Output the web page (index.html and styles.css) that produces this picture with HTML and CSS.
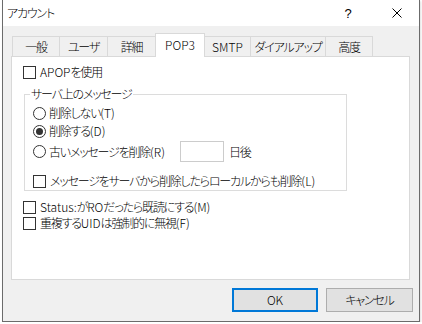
FILE: index.html
```html
<!DOCTYPE html>
<html lang="ja">
<head>
<meta charset="utf-8">
<title>アカウント</title>
<link rel="stylesheet" href="styles.css">
</head>
<body>
<div class="window">
  <div class="titlebar">
    <span class="title">アカウント</span>
    <span class="help">?</span>
    <span class="close">
      <svg width="10" height="10" viewBox="0 0 10 10"><path d="M0.5 0.5L9.5 9.5M9.5 0.5L0.5 9.5" stroke="#000" stroke-width="1" fill="none"/></svg>
    </span>
  </div>
  <div class="content">
    <div class="tabs">
      <div class="tab t1">一般</div>
      <div class="tab t2">ユーザ</div>
      <div class="tab t3">詳細</div>
      <div class="tab t4 active"><span class="en">POP3</span></div>
      <div class="tab t5"><span class="en">SMTP</span></div>
      <div class="tab t6">ダイアルアップ</div>
      <div class="tab t7">高度</div>
    </div>
    <div class="panel">
      <label class="row"><span class="check"></span><span><span class="en">APOP</span>を使用</span></label>
      <fieldset class="group">
        <legend>サーバ上のメッセージ</legend>
        <div class="row"><span class="radio"></span><span>削除しない<span class="en">(T)</span></span></div>
        <div class="row"><span class="radio on"></span><span>削除する<span class="en">(D)</span></span></div>
        <div class="row row-days">
          <div class="radio-label"><span class="radio"></span><span>古いメッセージを削除<span class="en">(R)</span></span></div>
          <span class="days-input"></span>
          <span class="days-unit">日後</span>
        </div>
        <div class="row row-local"><span class="check"></span><span>メッセージをサーバから削除したらローカルからも削除<span class="en">(L)</span></span></div>
      </fieldset>
      <div class="row row-status"><span class="check"></span><span><span class="en">Status:</span>が<span class="en">RO</span>だったら既読にする<span class="en">(M)</span></span></div>
      <div class="row"><span class="check"></span><span>重複する<span class="en">UID</span>は強制的に無視<span class="en">(F)</span></span></div>
    </div>
    <div class="buttons">
      <div class="btn ok"><span class="en">OK</span></div>
      <div class="btn cancel">キャンセル</div>
    </div>
  </div>
</div>
</body>
</html>
```

FILE: styles.css
```css
* { box-sizing: border-box; }
html, body { margin: 0; padding: 0; }
body {
  background: #ffffff;
  font-family: "Noto Sans CJK JP", "Noto Sans", sans-serif;
  font-size: 12px;
  font-weight: 300;
  letter-spacing: -1.2px;
  color: #000;
  font-feature-settings: "palt";
}
.en { letter-spacing: 0; }
.window {
  margin-left: 2px;
  width: 418px;
  height: 322px;
  border: 1px solid #6b6b6b;
  border-top: 0;
  background: #f0f0f0;
  display: flex;
  flex-direction: column;
  box-shadow: 1px 1px 2px rgba(0,0,0,0.12);
}
.titlebar {
  height: 26px;
  background: #fff;
  display: flex;
  align-items: center;
  flex-shrink: 0;
}
.title {
  padding-left: 4px;
  flex: 1;
  line-height: 16px;
}
.help {
  width: 10px;
  font-family: "Liberation Sans", sans-serif;
  font-size: 13px;
  font-weight: 400;
  letter-spacing: 0;
  margin-right: 39px;
  text-align: center;
}
.close {
  width: 10px;
  height: 10px;
  display: flex;
  margin-right: 17px;
}
.content {
  flex: 1;
  padding: 8px 9px 0 8px;
  display: flex;
  flex-direction: column;
}
.tabs {
  display: flex;
  align-items: flex-end;
  height: 22px;
  margin-left: 1px;
  position: relative;
  z-index: 1;
}
.tab {
  height: 20px;
  border: 1px solid #d9d9d9;
  border-bottom: 0;
  border-right: 0;
  background: #f0f0f0;
  display: flex;
  align-items: center;
  justify-content: center;
  line-height: 16px;
  padding-top: 1px;
  white-space: nowrap;
  flex-shrink: 0;
}
.tab.t7 { border-right: 1px solid #d9d9d9; }
.t1 { width: 47px; }
.t2 { width: 48px; }
.t3 { width: 48px; }
.t4 { width: 50px; }
.t5 { width: 45px; }
.t6 { width: 75px; }
.t7 { width: 48px; }
.tab.active {
  height: 24px;
  margin-bottom: -1px;
  background: #fff;
  border-right: 1px solid #d9d9d9;
  align-items: flex-start;
  padding-top: 3px;
}
.tab.active + .tab { border-left: 0; }
.panel {
  width: 399px;
  height: 224px;
  background: #fff;
  border: 1px solid #d9d9d9;
  padding: 7px 0 0 11px;
  display: flex;
  flex-direction: column;
  align-items: flex-start;
}
.row {
  height: 16px;
  display: flex;
  align-items: center;
  line-height: 16px;
  white-space: nowrap;
}
.check {
  width: 13px;
  height: 13px;
  border: 1px solid #333;
  background: #fff;
  margin-right: 4px;
  flex-shrink: 0;
}
.radio {
  width: 13px;
  height: 13px;
  border: 1px solid #333;
  border-radius: 50%;
  background: #fff;
  margin-right: 3px;
  flex-shrink: 0;
  display: flex;
  align-items: center;
  justify-content: center;
}
.radio.on::after {
  content: "";
  width: 7px;
  height: 7px;
  border-radius: 50%;
  background: #333;
}
.group {
  margin: 6px 0 0 1px;
  width: 323px;
  height: 105px;
  border: 1px solid #dcdcdc;
  padding: 3px 0 0 8px;
  display: flex;
  flex-direction: column;
  gap: 1px;
}
.group legend {
  padding: 0 1px;
  margin-left: -3px;
  line-height: 16px;
  height: 16px;
}
.group .row { margin-bottom: 1px; }
.row-days {
  height: 21px;
}
.radio-label {
  width: 147px;
  display: flex;
  align-items: center;
}
.days-input {
  width: 44px;
  height: 21px;
  border: 1px solid #cccccc;
  background: #fff;
}
.days-unit { margin-left: 5px; }
.row-local { margin-top: 9px; }
.row-status { margin-top: 8px; }
.buttons {
  display: flex;
  justify-content: flex-end;
  gap: 8px;
  margin-top: 8px;
  margin-right: -3px;
}
.btn {
  height: 24px;
  background: #e1e1e1;
  border: 1px solid #adadad;
  display: flex;
  align-items: center;
  justify-content: center;
  line-height: 16px;
}
.btn.ok { width: 86px; border: 2px solid #0078d7; }
.btn.cancel { width: 87px; }
```
